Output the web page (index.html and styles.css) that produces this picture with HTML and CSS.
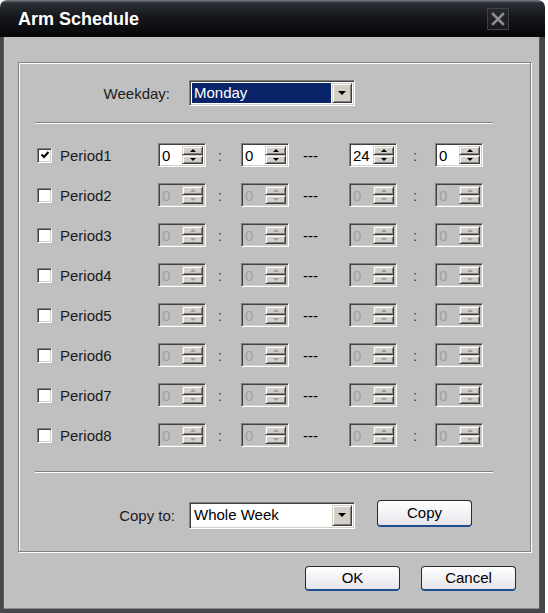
FILE: index.html
```html
<!DOCTYPE html>
<html>
<head>
<meta charset="utf-8">
<title>Arm Schedule</title>
<link rel="stylesheet" href="styles.css">
</head>
<body>
<div class="window">
  <div class="titlebar">
    <span class="title">Arm Schedule</span>
    <span class="close"><svg width="14" height="14" viewBox="0 0 14 14"><path d="M2 2 L12 12 M12 2 L2 12" stroke="#8e8e8e" stroke-width="2.6" stroke-linecap="square"/></svg></span>
  </div>
  <div class="client">
    <div class="group">
      <div class="wk-row">
        <span class="lbl lbl-wk">Weekday:</span>
        <div class="combo"><span class="combo-text sel">Monday</span><span class="combo-btn"><i class="arr-dn"></i></span></div>
      </div>
      <div class="sep sep-top"></div>
      <div class="periods">
        <div class="prow">
          <span class="cb"><svg width="10" height="10" viewBox="0 0 10 10"><path d="M1.5 4.5 L4 7 L8.5 2" stroke="#000" stroke-width="2" fill="none"/></svg></span>
          <span class="plbl">Period1</span>
          <div class="spin"><span class="sv">0</span><span class="sbs"><span class="sb"><i class="au"></i></span><span class="sb"><i class="ad"></i></span></span></div>
          <span class="colon c1">:</span>
          <div class="spin"><span class="sv">0</span><span class="sbs"><span class="sb"><i class="au"></i></span><span class="sb"><i class="ad"></i></span></span></div>
          <span class="dash">---</span>
          <div class="spin"><span class="sv">24</span><span class="sbs"><span class="sb"><i class="au"></i></span><span class="sb"><i class="ad"></i></span></span></div>
          <span class="colon c2">:</span>
          <div class="spin"><span class="sv">0</span><span class="sbs"><span class="sb"><i class="au"></i></span><span class="sb"><i class="ad"></i></span></span></div>
        </div>
        <div class="prow">
          <span class="cb"></span><span class="plbl">Period2</span>
          <div class="spin dis"><span class="sv">0</span><span class="sbs"><span class="sb"><i class="au"></i></span><span class="sb"><i class="ad"></i></span></span></div>
          <span class="colon c1">:</span>
          <div class="spin dis"><span class="sv">0</span><span class="sbs"><span class="sb"><i class="au"></i></span><span class="sb"><i class="ad"></i></span></span></div>
          <span class="dash">---</span>
          <div class="spin dis"><span class="sv">0</span><span class="sbs"><span class="sb"><i class="au"></i></span><span class="sb"><i class="ad"></i></span></span></div>
          <span class="colon c2">:</span>
          <div class="spin dis"><span class="sv">0</span><span class="sbs"><span class="sb"><i class="au"></i></span><span class="sb"><i class="ad"></i></span></span></div>
        </div>
        <div class="prow">
          <span class="cb"></span><span class="plbl">Period3</span>
          <div class="spin dis"><span class="sv">0</span><span class="sbs"><span class="sb"><i class="au"></i></span><span class="sb"><i class="ad"></i></span></span></div>
          <span class="colon c1">:</span>
          <div class="spin dis"><span class="sv">0</span><span class="sbs"><span class="sb"><i class="au"></i></span><span class="sb"><i class="ad"></i></span></span></div>
          <span class="dash">---</span>
          <div class="spin dis"><span class="sv">0</span><span class="sbs"><span class="sb"><i class="au"></i></span><span class="sb"><i class="ad"></i></span></span></div>
          <span class="colon c2">:</span>
          <div class="spin dis"><span class="sv">0</span><span class="sbs"><span class="sb"><i class="au"></i></span><span class="sb"><i class="ad"></i></span></span></div>
        </div>
        <div class="prow">
          <span class="cb"></span><span class="plbl">Period4</span>
          <div class="spin dis"><span class="sv">0</span><span class="sbs"><span class="sb"><i class="au"></i></span><span class="sb"><i class="ad"></i></span></span></div>
          <span class="colon c1">:</span>
          <div class="spin dis"><span class="sv">0</span><span class="sbs"><span class="sb"><i class="au"></i></span><span class="sb"><i class="ad"></i></span></span></div>
          <span class="dash">---</span>
          <div class="spin dis"><span class="sv">0</span><span class="sbs"><span class="sb"><i class="au"></i></span><span class="sb"><i class="ad"></i></span></span></div>
          <span class="colon c2">:</span>
          <div class="spin dis"><span class="sv">0</span><span class="sbs"><span class="sb"><i class="au"></i></span><span class="sb"><i class="ad"></i></span></span></div>
        </div>
        <div class="prow">
          <span class="cb"></span><span class="plbl">Period5</span>
          <div class="spin dis"><span class="sv">0</span><span class="sbs"><span class="sb"><i class="au"></i></span><span class="sb"><i class="ad"></i></span></span></div>
          <span class="colon c1">:</span>
          <div class="spin dis"><span class="sv">0</span><span class="sbs"><span class="sb"><i class="au"></i></span><span class="sb"><i class="ad"></i></span></span></div>
          <span class="dash">---</span>
          <div class="spin dis"><span class="sv">0</span><span class="sbs"><span class="sb"><i class="au"></i></span><span class="sb"><i class="ad"></i></span></span></div>
          <span class="colon c2">:</span>
          <div class="spin dis"><span class="sv">0</span><span class="sbs"><span class="sb"><i class="au"></i></span><span class="sb"><i class="ad"></i></span></span></div>
        </div>
        <div class="prow">
          <span class="cb"></span><span class="plbl">Period6</span>
          <div class="spin dis"><span class="sv">0</span><span class="sbs"><span class="sb"><i class="au"></i></span><span class="sb"><i class="ad"></i></span></span></div>
          <span class="colon c1">:</span>
          <div class="spin dis"><span class="sv">0</span><span class="sbs"><span class="sb"><i class="au"></i></span><span class="sb"><i class="ad"></i></span></span></div>
          <span class="dash">---</span>
          <div class="spin dis"><span class="sv">0</span><span class="sbs"><span class="sb"><i class="au"></i></span><span class="sb"><i class="ad"></i></span></span></div>
          <span class="colon c2">:</span>
          <div class="spin dis"><span class="sv">0</span><span class="sbs"><span class="sb"><i class="au"></i></span><span class="sb"><i class="ad"></i></span></span></div>
        </div>
        <div class="prow">
          <span class="cb"></span><span class="plbl">Period7</span>
          <div class="spin dis"><span class="sv">0</span><span class="sbs"><span class="sb"><i class="au"></i></span><span class="sb"><i class="ad"></i></span></span></div>
          <span class="colon c1">:</span>
          <div class="spin dis"><span class="sv">0</span><span class="sbs"><span class="sb"><i class="au"></i></span><span class="sb"><i class="ad"></i></span></span></div>
          <span class="dash">---</span>
          <div class="spin dis"><span class="sv">0</span><span class="sbs"><span class="sb"><i class="au"></i></span><span class="sb"><i class="ad"></i></span></span></div>
          <span class="colon c2">:</span>
          <div class="spin dis"><span class="sv">0</span><span class="sbs"><span class="sb"><i class="au"></i></span><span class="sb"><i class="ad"></i></span></span></div>
        </div>
        <div class="prow">
          <span class="cb"></span><span class="plbl">Period8</span>
          <div class="spin dis"><span class="sv">0</span><span class="sbs"><span class="sb"><i class="au"></i></span><span class="sb"><i class="ad"></i></span></span></div>
          <span class="colon c1">:</span>
          <div class="spin dis"><span class="sv">0</span><span class="sbs"><span class="sb"><i class="au"></i></span><span class="sb"><i class="ad"></i></span></span></div>
          <span class="dash">---</span>
          <div class="spin dis"><span class="sv">0</span><span class="sbs"><span class="sb"><i class="au"></i></span><span class="sb"><i class="ad"></i></span></span></div>
          <span class="colon c2">:</span>
          <div class="spin dis"><span class="sv">0</span><span class="sbs"><span class="sb"><i class="au"></i></span><span class="sb"><i class="ad"></i></span></span></div>
        </div>
      </div>
      <div class="sep sep-bot"></div>
      <div class="copy-row">
        <span class="lbl lbl-copy">Copy to:</span>
        <div class="combo combo-copy"><span class="combo-text">Whole Week</span><span class="combo-btn"><i class="arr-dn"></i></span></div>
        <button class="btn btn-copy">Copy</button>
      </div>
    </div>
    <div class="actions">
      <button class="btn">OK</button>
      <button class="btn">Cancel</button>
    </div>
  </div>
</div>
</body>
</html>
```
FILE: styles.css
```css
html, body {
  margin: 0;
  padding: 0;
  background: #ffffff;
}
body {
  font-family: "Liberation Sans", Arial, sans-serif;
  font-size: 15px;
  color: #000;
}
.window {
  width: 545px;
  height: 613px;
  display: flex;
  flex-direction: column;
}
.titlebar {
  height: 37px;
  flex: 0 0 37px;
  border-radius: 7px 7px 0 0;
  background: linear-gradient(#7a7e86 0px, #2c2f35 3px, #16181d 45%, #060607 100%);
  display: flex;
  align-items: center;
  padding-left: 18px;
  padding-right: 36px;
  box-sizing: border-box;
}
.title {
  color: #ffffff;
  font-weight: bold;
  font-size: 18px;
  margin-top: 2px;
}
.close {
  margin-left: auto;
  width: 22px;
  height: 22px;
  box-sizing: border-box;
  border: 1px solid #3d4045;
  background: linear-gradient(#26282d, #17191c);
  display: flex;
  align-items: center;
  justify-content: center;
  margin-top: 1px;
}
.client {
  flex: 1;
  background: #c0c0c0;
  border-left: 3px solid #46464d;
  border-right: 5px solid #46464d;
  border-bottom: 4px solid #46464d;
  box-shadow: inset 1px 0 0 #5c5c62, inset -1px 0 0 #5c5c62, inset 0 -1px 0 #8a8a8e;
  display: flex;
  flex-direction: column;
}
.group {
  margin: 25px 0 0 15px;
  width: 513px;
  height: 490px;
  box-sizing: border-box;
  border: 1px solid #808080;
  box-shadow: inset 1px 1px 0 #ffffff, 1px 1px 0 #ffffff;
  display: flex;
  flex-direction: column;
}
.wk-row, .copy-row {
  display: flex;
  align-items: center;
}
.wk-row {
  margin-top: 17px;
  height: 26px;
}
.lbl {
  text-align: right;
  color: #1a1a1a;
}
.lbl-wk {
  width: 151px;
  margin-right: 19px;
}
.lbl-copy {
  width: 156px;
  margin-right: 14px;
}
.combo {
  width: 166px;
  height: 26px;
  box-sizing: border-box;
  border: 1px solid;
  border-color: #808080 #ffffff #ffffff #808080;
  box-shadow: inset 1px 1px 0 #404040, inset -1px -1px 0 #d4d0c8;
  background: #ffffff;
  display: flex;
  padding: 2px;
}
.combo-copy {
  height: 27px;
}
.combo-text {
  flex: 1;
  line-height: 20px;
  padding-left: 2px;
  white-space: nowrap;
}
.combo-text.sel {
  background: #0a246a;
  color: #ffffff;
  margin-right: 1px;
}
.combo-btn {
  width: 20px;
  box-sizing: border-box;
  background: #d4d0c8;
  border: 1px solid;
  border-color: #d4d0c8 #404040 #404040 #d4d0c8;
  box-shadow: inset 1px 1px 0 #ffffff, inset -1px -1px 0 #808080;
  display: flex;
  align-items: center;
  justify-content: center;
}
.arr-dn {
  width: 0;
  height: 0;
  border-left: 4px solid transparent;
  border-right: 4px solid transparent;
  border-top: 4px solid #000;
}
.sep {
  margin-left: 16px;
  width: 458px;
  height: 1px;
  background: #808080;
  border-bottom: 1px solid #ffffff;
}
.sep-top {
  margin-top: 16px;
}
.sep-bot {
  margin-top: 24px;
}
.periods {
  margin-top: 19px;
  display: flex;
  flex-direction: column;
  gap: 16px;
}
.prow {
  height: 24px;
  padding-left: 18px;
  display: grid;
  grid-template-columns: 23px 98px 48px 35px 48px 60px 48px 38px 48px;
  align-items: center;
}
.cb {
  width: 15px;
  height: 15px;
  box-sizing: border-box;
  border: 1px solid;
  border-color: #808080 #ffffff #ffffff #808080;
  box-shadow: inset 1px 1px 0 #404040, inset -1px -1px 0 #d4d0c8;
  background: #ffffff;
  display: flex;
  align-items: center;
  justify-content: center;
}
.cb svg {
  display: block;
}
.plbl {
  color: #1a1a1a;
}
.colon {
  color: #404040;
}
.c1 {
  padding-left: 12px;
}
.c2 {
  padding-left: 16px;
}
.dash {
  padding-left: 14px;
}
.spin {
  width: 48px;
  height: 24px;
  box-sizing: border-box;
  border: 1px solid;
  border-color: #808080 #ffffff #ffffff #808080;
  box-shadow: inset 1px 1px 0 #404040, inset -1px -1px 0 #d4d0c8;
  background: #ffffff;
  display: flex;
  padding: 2px 2px 2px 2px;
}
.sv {
  flex: 1;
  line-height: 20px;
  padding-left: 1px;
  color: #000;
}
.sbs {
  width: 21px;
  display: flex;
  flex-direction: column;
}
.sb {
  flex: 1;
  box-sizing: border-box;
  background: #d4d0c8;
  border: 1px solid;
  border-color: #d4d0c8 #404040 #404040 #d4d0c8;
  box-shadow: inset 1px 1px 0 #ffffff, inset -1px -1px 0 #808080;
  display: flex;
  align-items: center;
  justify-content: center;
}
.au, .ad {
  width: 0;
  height: 0;
  border-left: 3px solid transparent;
  border-right: 3px solid transparent;
}
.au {
  border-bottom: 3px solid #000;
}
.ad {
  border-top: 3px solid #000;
}
.spin.dis {
  background: #c0c0c0;
}
.spin.dis .sv {
  color: #a0a0a0;
}
.spin.dis .au {
  border-bottom-color: #a0a0a0;
}
.spin.dis .ad {
  border-top-color: #a0a0a0;
}
.copy-row {
  margin-top: 27px;
  height: 30px;
}
.btn {
  width: 95px;
  height: 25px;
  box-sizing: border-box;
  font-family: "Liberation Sans", Arial, sans-serif;
  font-size: 15px;
  color: #000;
  background: linear-gradient(#ffffff, #f0f0f4 60%, #e4e4ea);
  border: 1px solid #2a2a2a;
  border-bottom: 2px solid #1f4d8e;
  border-radius: 4px;
  padding: 0;
  line-height: 20px;
}
.btn-copy {
  margin-left: 22px;
  height: 27px;
  margin-top: -3px;
}
.actions {
  margin-top: 14px;
  display: flex;
  justify-content: flex-end;
  gap: 21px;
  padding-right: 24px;
}
```
